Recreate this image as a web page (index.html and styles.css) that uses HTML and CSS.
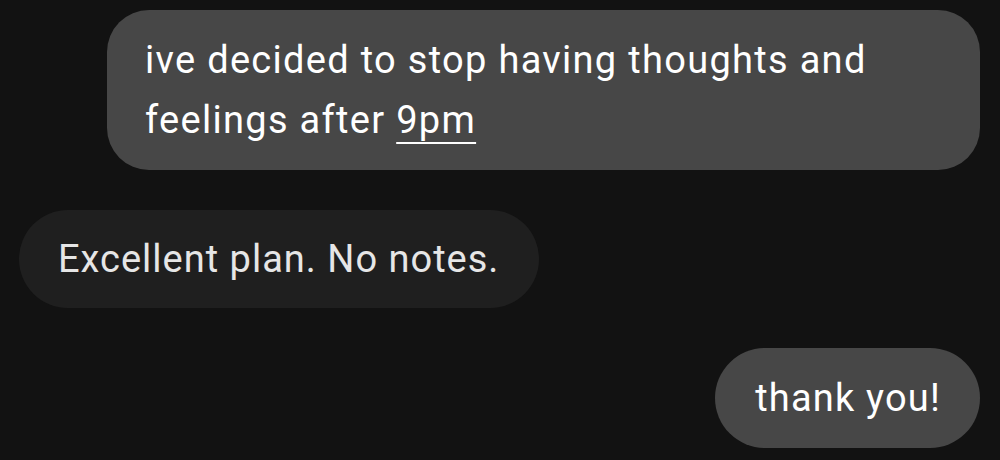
FILE: index.html
```html
<!DOCTYPE html>
<html>
<head>
<meta charset="utf-8">
<link rel="stylesheet" href="styles.css">
</head>
<body>
<div class="thread">
  <div class="bubble sent wide">ive decided to stop having thoughts and feelings after <span class="link">9pm</span></div>
  <div class="bubble received">Excellent plan. No notes.</div>
  <div class="bubble sent pill">thank you!</div>
</div>
</body>
</html>
```
FILE: styles.css
```css
html, body {
  margin: 0;
  padding: 0;
  background: #121212;
  width: 1000px;
  height: 460px;
  overflow: hidden;
}
.thread {
  display: flex;
  flex-direction: column;
  gap: 40px;
  padding: 10px 20px 0 19px;
  font-family: Roboto, "Noto Sans", sans-serif;
  font-size: 38px;
  letter-spacing: 1.2px;
  line-height: 60px;
}
.bubble {
  box-sizing: border-box;
  padding: 20px 39px;
}
.sent {
  align-self: flex-end;
  background: #474747;
  color: #ffffff;
}
.wide {
  width: 873px;
  padding: 20px 38px;
  border-radius: 42px;
  letter-spacing: 1.3px;
}
.pill {
  border-radius: 50px;
  padding: 20px 39px 20px 40px;
}
.received {
  align-self: flex-start;
  background: #1f1f1f;
  color: #e6e6e6;
  padding: 19px 40px 19px 39px;
  border-radius: 49px;
  letter-spacing: 1px;
}
.link {
  text-decoration: underline;
  text-decoration-thickness: 2px;
  text-underline-offset: 9px;
}
```
